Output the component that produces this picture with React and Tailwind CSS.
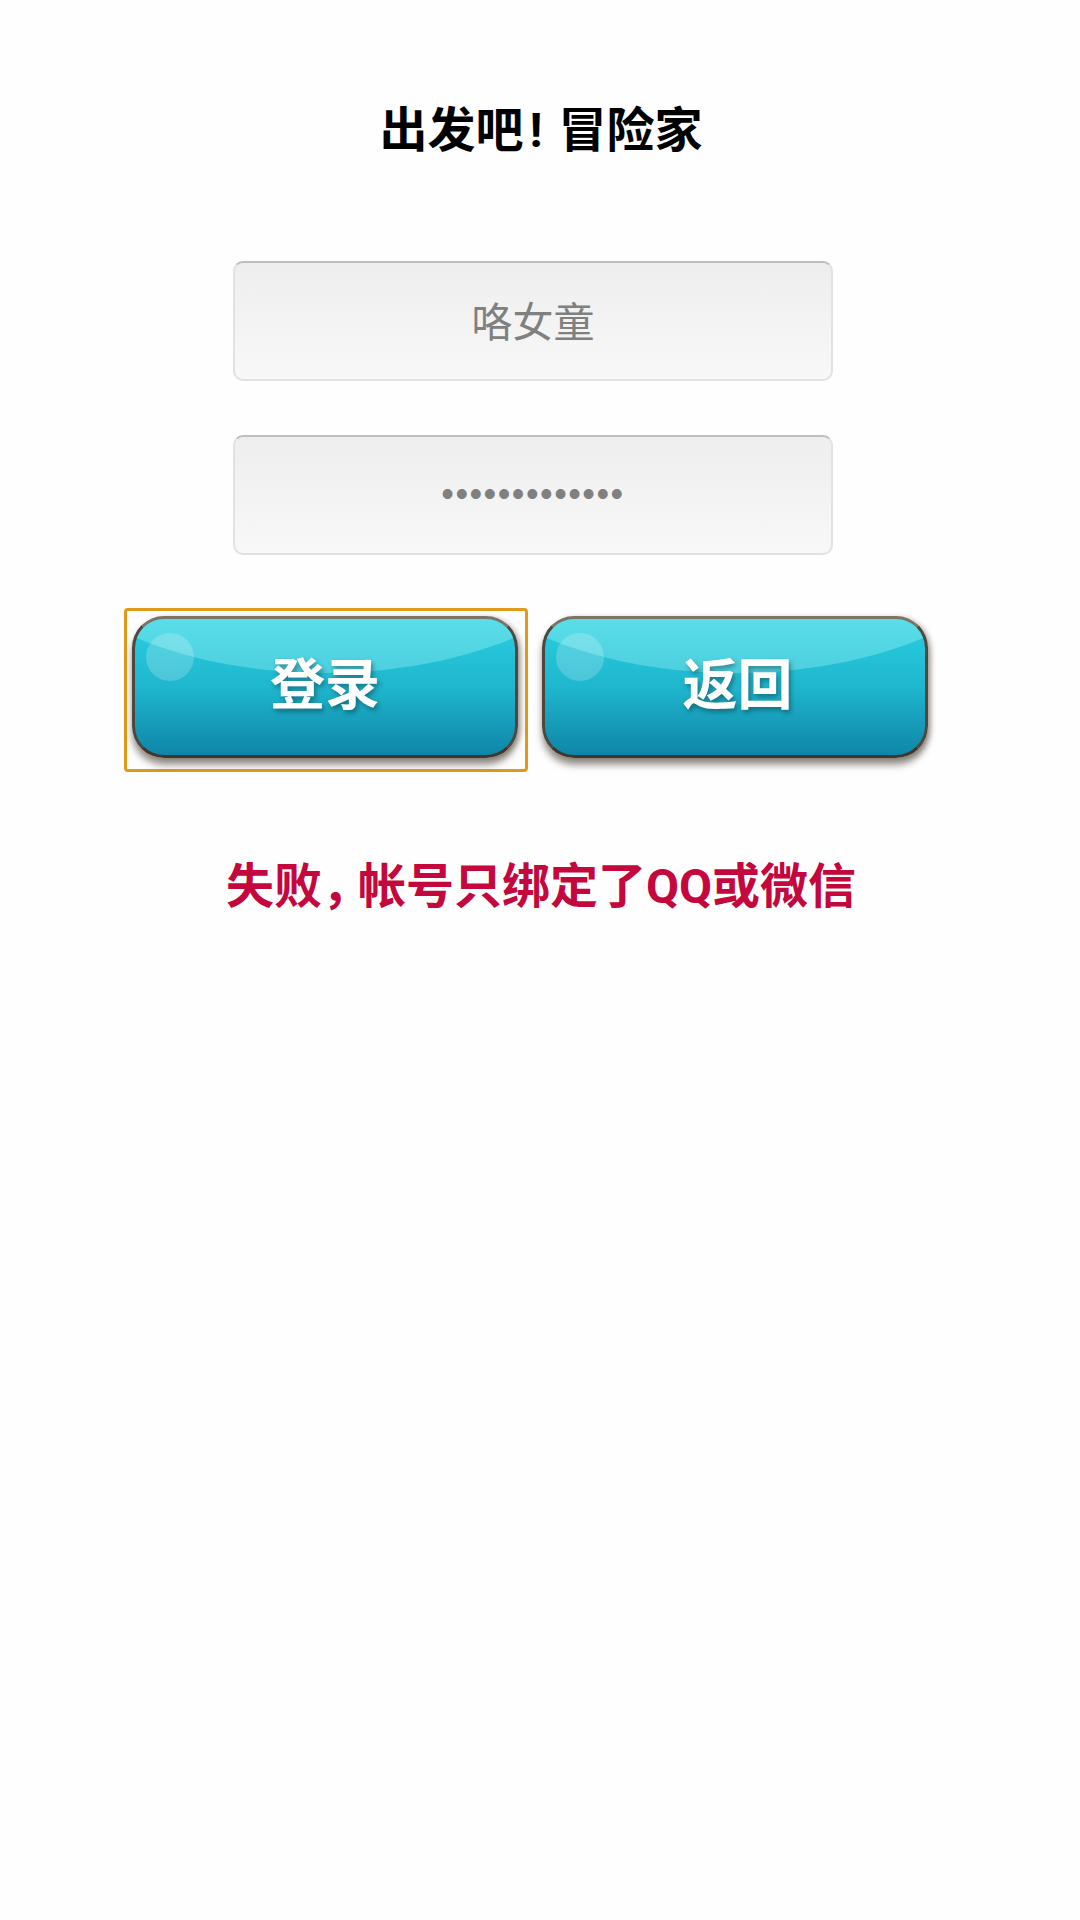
import React from 'react';

const cjk = "font-['Roboto','Noto_Sans_CJK_SC',sans-serif]";

// Glossy teal button, drawn the way the original image looks
const GlossButton = ({ label, textClass }) => (
    <div className="w-[396px] h-[155px] pr-[10px] pb-[13px]">
        <div className="relative h-[142px] w-[386px] overflow-hidden rounded-[32px] border-[3px] border-t-[#7d7266] border-x-[#4f463e] border-b-[#43352a] bg-gradient-to-b from-[#2bcfe0] via-[#1fb6ce] to-[#0f86a8] shadow-[0_7px_7px_rgba(70,60,50,0.55),3px_1px_5px_rgba(70,60,50,0.3)]">
            <div className="absolute left-[-110px] top-[-262px] h-[316px] w-[600px] rounded-[50%] bg-gradient-to-b from-[#9ff4f7]/60 to-[#9ff4f7]/35" />
            <div className="absolute left-[11px] top-[14px] h-[48px] w-[48px] rounded-full bg-white/20" />
            <div className={`relative flex h-full items-center justify-center pb-[4px] text-[55px] font-bold leading-none text-white [text-shadow:2px_3px_5px_rgba(0,0,0,0.35)] ${textClass}`}>
                {label}
            </div>
        </div>
    </div>
);

const Field = ({ type, value, className }) => (
    <input
        type={type}
        value={value}
        readOnly
        className={`block h-[120px] w-[600px] rounded-[10px] border-2 border-[#dde4e3] border-t-[#bbbfbe] bg-gradient-to-b from-[#eeeeee] to-[#f8f8f8] text-center text-[#808080] outline-none ${className}`}
    />
);

const App = () => {
    return (
        <div className={`min-h-[1920px] w-[1080px] bg-[#fefefe] ${cjk}`}>
            <h1 className="pt-[99px] pl-[2px] text-center text-[48px] font-bold leading-[64px] text-black">
                出发吧<span className="ml-[6px] mr-[4px]">!</span> 冒险家
            </h1>

            <div className="ml-[233px] mt-[98px] flex flex-col gap-[54px]">
                <Field type="text" value="咯女童" className="pb-[4px] text-[41px]" />
                <Field type="password" value="1234567890123" className="pb-[2px] font-['Liberation_Sans'] text-[36px] tracking-[1.5px]" />
            </div>

            <div className="ml-[124px] mt-[53px] flex items-start gap-[14px]">
                <div className="h-[164px] w-[404px] rounded-[4px] border-[3px] border-[#e09a1a] pl-[5px] pt-[5px]">
                    <GlossButton label="登录" textClass="" />
                </div>
                <div className="pt-[8px]">
                    <GlossButton label="返回" textClass="pl-[5px]" />
                </div>
            </div>

            <p className="mt-[83px] pl-[2px] text-center text-[48px] font-bold leading-[64px] text-[#c4073c]">
                失败<span className="tracking-[-12px]">，</span>帐号只绑定了QQ或微信
            </p>
        </div>
    );
};

export default App;
